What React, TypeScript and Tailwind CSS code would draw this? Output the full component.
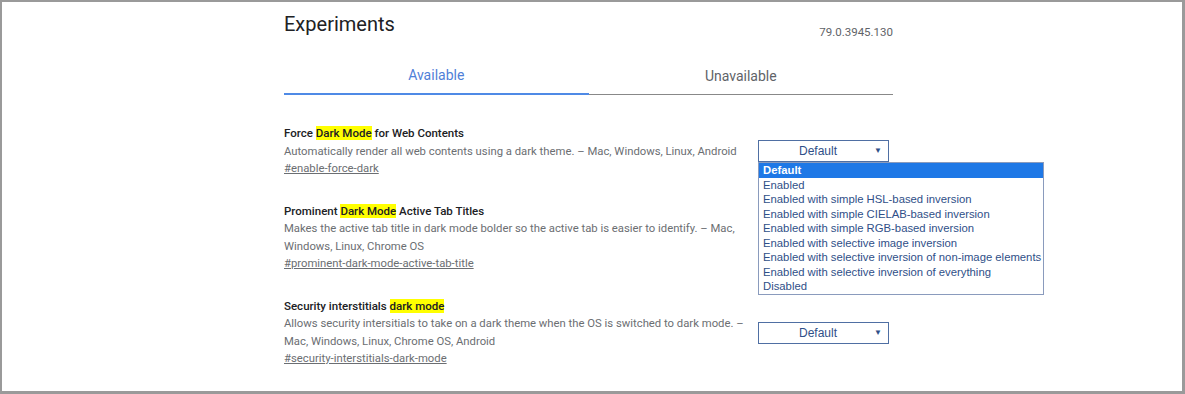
import React from 'react';

type Flag = {
  pre: string;
  mark: string;
  post: string;
  desc: string;
  tag: string;
  open?: boolean;
  covered?: boolean;
};

const flags: Flag[] = [
  {
    pre: 'Force ',
    mark: 'Dark Mode',
    post: ' for Web Contents',
    desc: 'Automatically render all web contents using a dark theme. – Mac, Windows, Linux, Android',
    tag: '#enable-force-dark',
    open: true,
  },
  {
    pre: 'Prominent ',
    mark: 'Dark Mode',
    post: ' Active Tab Titles',
    desc: 'Makes the active tab title in dark mode bolder so the active tab is easier to identify. – Mac, Windows, Linux, Chrome OS',
    tag: '#prominent-dark-mode-active-tab-title',
    covered: true,
  },
  {
    pre: 'Security interstitials ',
    mark: 'dark mode',
    post: '',
    desc: 'Allows security intersitials to take on a dark theme when the OS is switched to dark mode. – Mac, Windows, Linux, Chrome OS, Android',
    tag: '#security-interstitials-dark-mode',
  },
];

const options = [
  'Default',
  'Enabled',
  'Enabled with simple HSL-based inversion',
  'Enabled with simple CIELAB-based inversion',
  'Enabled with simple RGB-based inversion',
  'Enabled with selective image inversion',
  'Enabled with selective inversion of non-image elements',
  'Enabled with selective inversion of everything',
  'Disabled',
];

// the second select sits under the open list, so it is kept but not painted
const SelectBox: React.FC<{ open?: boolean; covered?: boolean }> = ({ open, covered }) => (
  <div className={`relative w-[131px] shrink-0 ${covered ? 'invisible' : ''}`}>
    <div className="h-[22px] border border-[#4f6fa3] bg-white flex items-center pl-[40px] pr-[6px] text-[12px] text-[#2f4f88] font-['Liberation_Sans',Arial,sans-serif]">
      <span className="flex-1">Default</span>
      <span className="text-[8px]">▼</span>
    </div>
    {open && (
      <ul className="absolute left-0 top-[22px] z-10 w-[286px] border border-[#8a9bbd] bg-white text-[11.3px] leading-[14.5px] text-[#2f4f88] whitespace-nowrap font-['Liberation_Sans',Arial,sans-serif]">
        {options.map((o, i) => (
          <li key={o} className={i === 0 ? 'bg-[#1e78e6] text-white font-bold pl-[4px]' : 'pl-[4px]'}>
            {o}
          </li>
        ))}
      </ul>
    )}
  </div>
);

export default function App() {
  return (
    <div className="w-[1185px] h-[394px] overflow-hidden bg-white border-t-2 border-l-2 border-b-[3px] border-r-[3px] border-[#9a9a9a] font-['Roboto',sans-serif]">
      <div className="ml-[282px] w-[609px]">
        <div className="flex items-end justify-between pt-[10px]">
          <h1 className="text-[20px] leading-[24px] text-[#202124]">Experiments</h1>
          <span className="text-[11.5px] text-[#5f6368] leading-[14px] mb-[-3px]">79.0.3945.130</span>
        </div>

        <div className="flex mt-[22px]">
          <div className="flex-1 h-[37px] flex items-center justify-center text-[14px] text-[#4f80d8] border-b-2 border-[#4f8ae6]">
            Available
          </div>
          <div className="flex-1 h-[37px] flex items-center justify-center text-[14px] text-[#5f6368] border-b border-[#888888] mb-[1px]">
            Unavailable
          </div>
        </div>

        <div className="flex flex-col gap-[25px] pt-[29px]">
          {flags.map((f) => (
            <div key={f.tag} className="flex items-center">
              <div className="w-[474px] pr-[8px] text-[11.3px] leading-[17.5px]">
                <div className="text-[11.5px] font-medium text-[#202124]">
                  {f.pre}
                  <mark className="bg-[#ffff00] text-[#202124]">{f.mark}</mark>
                  {f.post}
                </div>
                <p className="text-[#6b6e72]">{f.desc}</p>
                <a className="text-[#6b6e72] underline">{f.tag}</a>
              </div>
              <SelectBox open={f.open} covered={f.covered} />
            </div>
          ))}
        </div>
      </div>
    </div>
  );
}
